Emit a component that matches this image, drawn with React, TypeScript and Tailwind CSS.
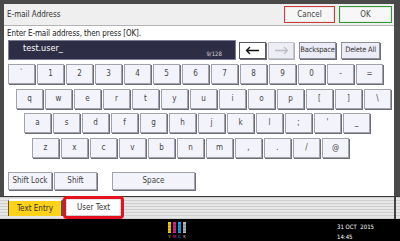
import React from "react";

const row1 = ["`", "1", "2", "3", "4", "5", "6", "7", "8", "9", "0", "-", "="];
const row2 = ["q", "w", "e", "r", "t", "y", "u", "i", "o", "p", "[", "]", "\\"];
const row3 = ["a", "s", "d", "f", "g", "h", "j", "k", "l", ";", "'", "_"];
const row4 = ["z", "x", "c", "v", "b", "n", "m", ",", ".", "/", "@"];

const keyCls =
  "w-[27px] h-[20px] flex items-center justify-center bg-[#f3f3fb] border border-[#a2a2ac] shadow-[1px_1px_0_#6e6e78] text-[8px] text-[#444] leading-none";

function KeyRow({ keys, pad, mt }: { keys: string[]; pad: string; mt: string }) {
  return (
    <div className={`flex gap-[2px] ${pad} ${mt}`}>
      {keys.map((k, i) => (
        <div key={i} className={keyCls}>
          {k}
        </div>
      ))}
    </div>
  );
}

function Ymck() {
  return (
    <svg width="20" height="16" viewBox="0 0 20 16">
      <rect x="0" y="0" width="3" height="11" fill="#f2d000" />
      <rect x="5" y="0" width="3" height="11" fill="#e0208c" />
      <rect x="10" y="0" width="3" height="11" fill="#1aa0e6" />
      <rect x="15" y="0" width="3" height="11" fill="#b4b4b4" />
      <g stroke="#000" strokeWidth="0.6" opacity="0.5">
        <line x1="0" y1="3" x2="18" y2="3" />
        <line x1="0" y1="6" x2="18" y2="6" />
        <line x1="0" y1="9" x2="18" y2="9" />
      </g>
      <text x="1.5" y="15.5" fontSize="4" fill="#f2d000" textAnchor="middle" fontFamily="DejaVu Sans">Y</text>
      <text x="6.5" y="15.5" fontSize="4" fill="#e0208c" textAnchor="middle" fontFamily="DejaVu Sans">M</text>
      <text x="11.5" y="15.5" fontSize="4" fill="#1aa0e6" textAnchor="middle" fontFamily="DejaVu Sans">C</text>
      <text x="16.5" y="15.5" fontSize="4" fill="#cccccc" textAnchor="middle" fontFamily="DejaVu Sans">K</text>
    </svg>
  );
}

export default function App() {
  return (
    <div className="w-[400px] h-[241px] bg-black flex flex-col overflow-hidden font-['Liberation_Sans_Narrow','DejaVu_Sans_Condensed','Liberation_Sans',sans-serif]">
      {/* frame + dialog */}
      <div className="h-[196px] bg-[#4a4a4a] pt-[4px] pl-[4px] pr-[6px] flex">
        <div className="flex-1 bg-white flex flex-col">
          {/* title bar */}
          <div className="h-[22px] bg-[#efefef] border-b border-[#b4b4b4] flex items-center justify-between pl-[3px] pr-[2px]">
            <span className="text-[8px] text-[#333] leading-none">E-mail Address</span>
            <div className="flex gap-[4px]">
              <div className="w-[51px] h-[17px] bg-[#f7f7f7] border border-[#d23a3a] shadow-[inset_0_0_0_1px_#e8e8e8] flex items-center justify-center text-[8px] text-[#444] leading-none">
                Cancel
              </div>
              <div className="w-[53px] h-[17px] bg-[#f7f7f7] border border-[#2f9a2f] shadow-[inset_0_0_0_1px_#e8e8e8] flex items-center justify-center text-[8px] text-[#444] leading-none">
                OK
              </div>
            </div>
          </div>

          {/* prompt */}
          <div className="mt-[3px] pl-[3px] text-[8px] tracking-[-0.1px] leading-[10px] text-[#222] whitespace-nowrap">
            Enter E-mail address, then press [OK].
          </div>

          {/* input row */}
          <div className="mt-[1px] pl-[4px] h-[20px] flex items-center">
            <div className="w-[228px] h-[20px] bg-[#2d2d45] border border-[#7b7b92] flex pl-[14px] pr-[13px]">
              <span className="text-[9px] text-white leading-none pt-[3px]">test.user_</span>
              <span className="ml-auto self-end pb-[2px] text-[6px] leading-none text-[#d0d0d8]">9/128</span>
            </div>
            <div className="ml-[3px] w-[27px] h-[17px] bg-white border border-[#5a5a66] shadow-[1px_1px_0_#6e6e78] flex items-center justify-center">
              <svg width="15" height="9" viewBox="0 0 15 9">
                <path d="M14 4.5H1.5M5 1L1.5 4.5L5 8" stroke="#111" strokeWidth="1.3" fill="none" />
              </svg>
            </div>
            <div className="ml-[2px] w-[26px] h-[17px] bg-[#ededf5] border border-[#c4c4cc] shadow-[1px_1px_0_#b0b0b8] flex items-center justify-center">
              <svg width="15" height="9" viewBox="0 0 15 9">
                <path d="M1 4.5H13.5M10 1L13.5 4.5L10 8" stroke="#bdbdc5" strokeWidth="1.3" fill="none" />
              </svg>
            </div>
            <div className="ml-[5px] w-[37px] h-[17px] bg-[#ececf6] border border-[#8e8e9a] shadow-[1px_1px_0_#6e6e78] flex items-center justify-center text-[7.5px] tracking-[-0.2px] text-[#333] leading-none whitespace-nowrap">
              Backspace
            </div>
            <div className="ml-[5px] w-[39px] h-[17px] bg-[#ececf6] border border-[#8e8e9a] shadow-[1px_1px_0_#6e6e78] flex items-center justify-center text-[7.5px] tracking-[-0.2px] text-[#333] leading-none whitespace-nowrap">
              Delete All
            </div>
          </div>

          <KeyRow keys={row1} pad="pl-[4px]" mt="mt-[4px]" />
          <KeyRow keys={row2} pad="pl-[12px]" mt="mt-[5px]" />
          <KeyRow keys={row3} pad="pl-[20px]" mt="mt-[4px]" />
          <KeyRow keys={row4} pad="pl-[28px]" mt="mt-[5px]" />

          {/* bottom row */}
          <div className="mt-[14px] pl-[4px] flex">
            <div className="w-[44px] h-[18px] bg-[#f3f3fb] border border-[#a2a2ac] shadow-[1px_1px_0_#6e6e78] flex items-center justify-center text-[8px] text-[#444] leading-none whitespace-nowrap">
              Shift Lock
            </div>
            <div className="ml-[2px] w-[43px] h-[18px] bg-[#f3f3fb] border border-[#a2a2ac] shadow-[1px_1px_0_#6e6e78] flex items-center justify-center text-[8px] text-[#444] leading-none">
              Shift
            </div>
            <div className="ml-[15px] w-[83px] h-[18px] bg-[#f3f3fb] border border-[#a2a2ac] shadow-[1px_1px_0_#6e6e78] flex items-center justify-center text-[8px] text-[#444] leading-none">
              Space
            </div>
          </div>
        </div>
      </div>

      {/* tab bar */}
      <div className="h-[23px] border-t border-[#3a3a3a] bg-[repeating-linear-gradient(to_bottom,#cfcfcf_0px,#cfcfcf_1px,#e6e6e6_1px,#e6e6e6_3px)] flex items-stretch">
        <div className="w-[8px]" />
        <div className="mt-[2px] mb-[3px] w-[55px] border-l border-r-2 border-[#555] border-t-2 border-t-white bg-[#ffd21a] flex items-center justify-center text-[8px] text-[#333] leading-none">
          Text Entry
        </div>
        <div className="-mt-[1px] w-[61px] border-[3px] border-[#e3121c] rounded-[4px] px-[1px] pt-[1px] pb-[1px] flex">
          <div className="flex-1 bg-white flex items-center justify-center text-[8px] text-[#333] leading-none">
            User Text
          </div>
        </div>
        <div className="flex-1" />
        <div className="w-[6px] border-l-2 border-[#444]" />
      </div>

      {/* status bar */}
      <div className="h-[22px] bg-black flex items-start">
        <div className="ml-[168px] mt-[3px]">
          <Ymck />
        </div>
        <div className="ml-[149px] mt-[3px] flex flex-col text-[6px] leading-[10px] text-white font-['DejaVu_Sans_Condensed','Liberation_Sans_Narrow',sans-serif] whitespace-pre">
          <span>31 OCT  2015</span>
          <span>14:45</span>
        </div>
      </div>
    </div>
  );
}
